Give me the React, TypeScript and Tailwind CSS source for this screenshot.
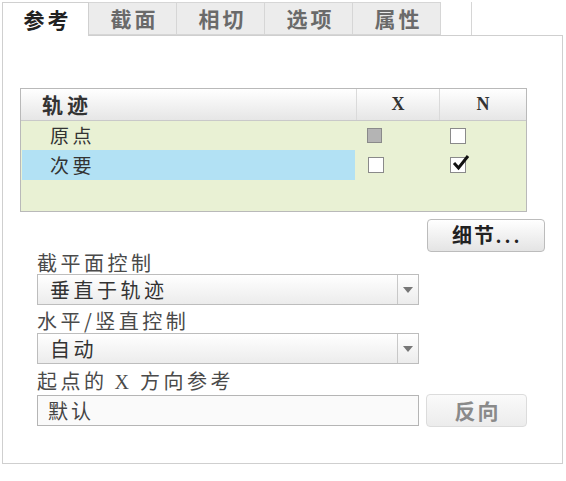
import { useState } from "react";

const tabs = ["参考", "截面", "相切", "选项", "属性"];

function Box({ state }: { state: "empty" | "gray" | "checked" }) {
  if (state === "gray") {
    return <div className="w-[15px] h-[15px] border border-[#8a8a8a] bg-[#b4b4b4]" />;
  }
  return (
    <div className="relative w-[16px] h-[16px] border border-[#8a8a8a] bg-white">
      {state === "checked" && (
        <svg className="absolute left-[1px] top-[-5px]" width="18" height="18" viewBox="0 0 18 18">
          <path d="M2 10 L6.5 15 L16 3" fill="none" stroke="#111" strokeWidth="3" strokeLinejoin="miter" />
        </svg>
      )}
    </div>
  );
}

function Select({ value }: { value: string }) {
  return (
    <div className="flex w-[382px] h-[31px] border border-[#bdbdbd] bg-gradient-to-b from-white to-[#ececec]">
      <div className="flex-1 pl-[12px] flex items-center text-[20px] tracking-[3.5px] text-[#333]">{value}</div>
      <div className="w-[21px] border-l border-[#c8c8c8] flex items-center justify-center">
        <svg width="10" height="6" viewBox="0 0 10 6">
          <path d="M0 0 L10 0 L5 6 Z" fill="#777" />
        </svg>
      </div>
    </div>
  );
}

export default function App() {
  const [active] = useState(0);

  return (
    <div
      className="w-[566px] h-[481px] bg-white pt-[2px] pl-[2px]"
      style={{ fontFamily: '"Noto Sans CJK SC", "Liberation Sans", sans-serif' }}
    >
      <div className="flex h-[34px] w-[561px] border-b border-[#cfcfcf]">
        {tabs.map((t, i) => (
          <div
            key={t}
            className={
              i === active
                ? "w-[87px] h-[34px] -mb-px bg-white border border-b-0 border-[#d0d0d0] flex items-center justify-center pl-[4px] text-[21px] tracking-[3px] font-bold text-[#222]"
                : "w-[88px] h-[33px] bg-[#ececec] border border-l-0 border-[#d6d6d6] flex items-center justify-center pl-[4px] text-[21px] tracking-[3px] font-bold text-[#6a6a6a]"
            }
          >
            {t}
          </div>
        ))}
        <div className="w-[31px] h-[33px] border-r border-[#d6d6d6]" />
      </div>

      <div className="w-[561px] h-[428px] border border-t-0 border-[#cfcfcf] pt-[52px]">
        <div className="ml-[17px] w-[507px] h-[124px] border border-[#b9b9b9] bg-[#e9f1d4] flex flex-col">
          <div className="flex h-[32px] bg-gradient-to-b from-white to-[#e6e6e6] border-b border-[#c9c9c9]">
            <div className="w-[335px] pl-[21px] flex items-center text-[21px] tracking-[4px] font-bold text-[#333]">轨迹</div>
            <div
              className="w-[83px] border-l border-[#dadada] flex items-center justify-center text-[18px] font-bold text-[#333]"
              style={{ fontFamily: '"Liberation Serif", serif' }}
            >
              X
            </div>
            <div
              className="flex-1 border-l border-[#dadada] flex items-center justify-center text-[18px] font-bold text-[#333]"
              style={{ fontFamily: '"Liberation Serif", serif' }}
            >
              N
            </div>
          </div>
          <div className="flex h-[29px] items-center">
            <div className="w-[335px] pl-[29px] text-[19px] tracking-[3.5px] text-[#333]">原点</div>
            <div className="w-[83px] pl-[11px]">
              <Box state="gray" />
            </div>
            <div className="flex-1 pl-[11px]">
              <Box state="empty" />
            </div>
          </div>
          <div className="flex h-[30px] items-center">
            <div className="w-[333px] ml-[1px] h-[30px] bg-[#b2e1f4] pl-[28px] flex items-center text-[19px] tracking-[3.5px] text-[#333]">
              次要
            </div>
            <div className="w-[83px] pl-[12px] ml-[1px]">
              <Box state="empty" />
            </div>
            <div className="flex-1 pl-[11px]">
              <Box state="checked" />
            </div>
          </div>
        </div>

        <div className="flex justify-end pr-[17px] mt-[7px]">
          <button className="w-[118px] h-[33px] rounded-[4px] border border-[#bcbcbc] bg-gradient-to-b from-white to-[#e4e4e4] text-[20px] font-bold text-[#222] tracking-[2px] pl-[3px]">
            细节<span style={{ fontFamily: '"Liberation Serif", serif' }} className="tracking-[4px]">...</span>
          </button>
        </div>

        <div className="ml-[34px] flex flex-col text-[20px] tracking-[3.5px] text-[#4a4a4a]">
          <div className="h-[22px] leading-[22px]">截平面控制</div>
          <Select value="垂直于轨迹" />
          <div className="h-[28px] leading-[28px] pt-[2px]">水平/竖直控制</div>
          <Select value="自动" />
          <div className="h-[30px] leading-[30px] pt-[2px]">
            起点的
            <span style={{ fontFamily: '"Liberation Serif", serif' }} className="tracking-normal ml-[7px] mr-[11px]">X</span>
            方向参考
          </div>
          <div className="flex items-center">
            <div className="w-[382px] h-[31px] border border-[#b5b5b5] bg-[#fafafa] pl-[10px] flex items-center text-[20px] tracking-[3px] text-[#444]">
              默认
            </div>
            <button className="ml-[7px] w-[101px] h-[33px] rounded-[4px] border border-[#dcdcdc] bg-gradient-to-b from-[#fafafa] to-[#ececec] text-[21px] tracking-[2px] font-bold text-[#8a8a8a] pl-[2px]">
              反向
            </button>
          </div>
        </div>
      </div>
    </div>
  );
}
